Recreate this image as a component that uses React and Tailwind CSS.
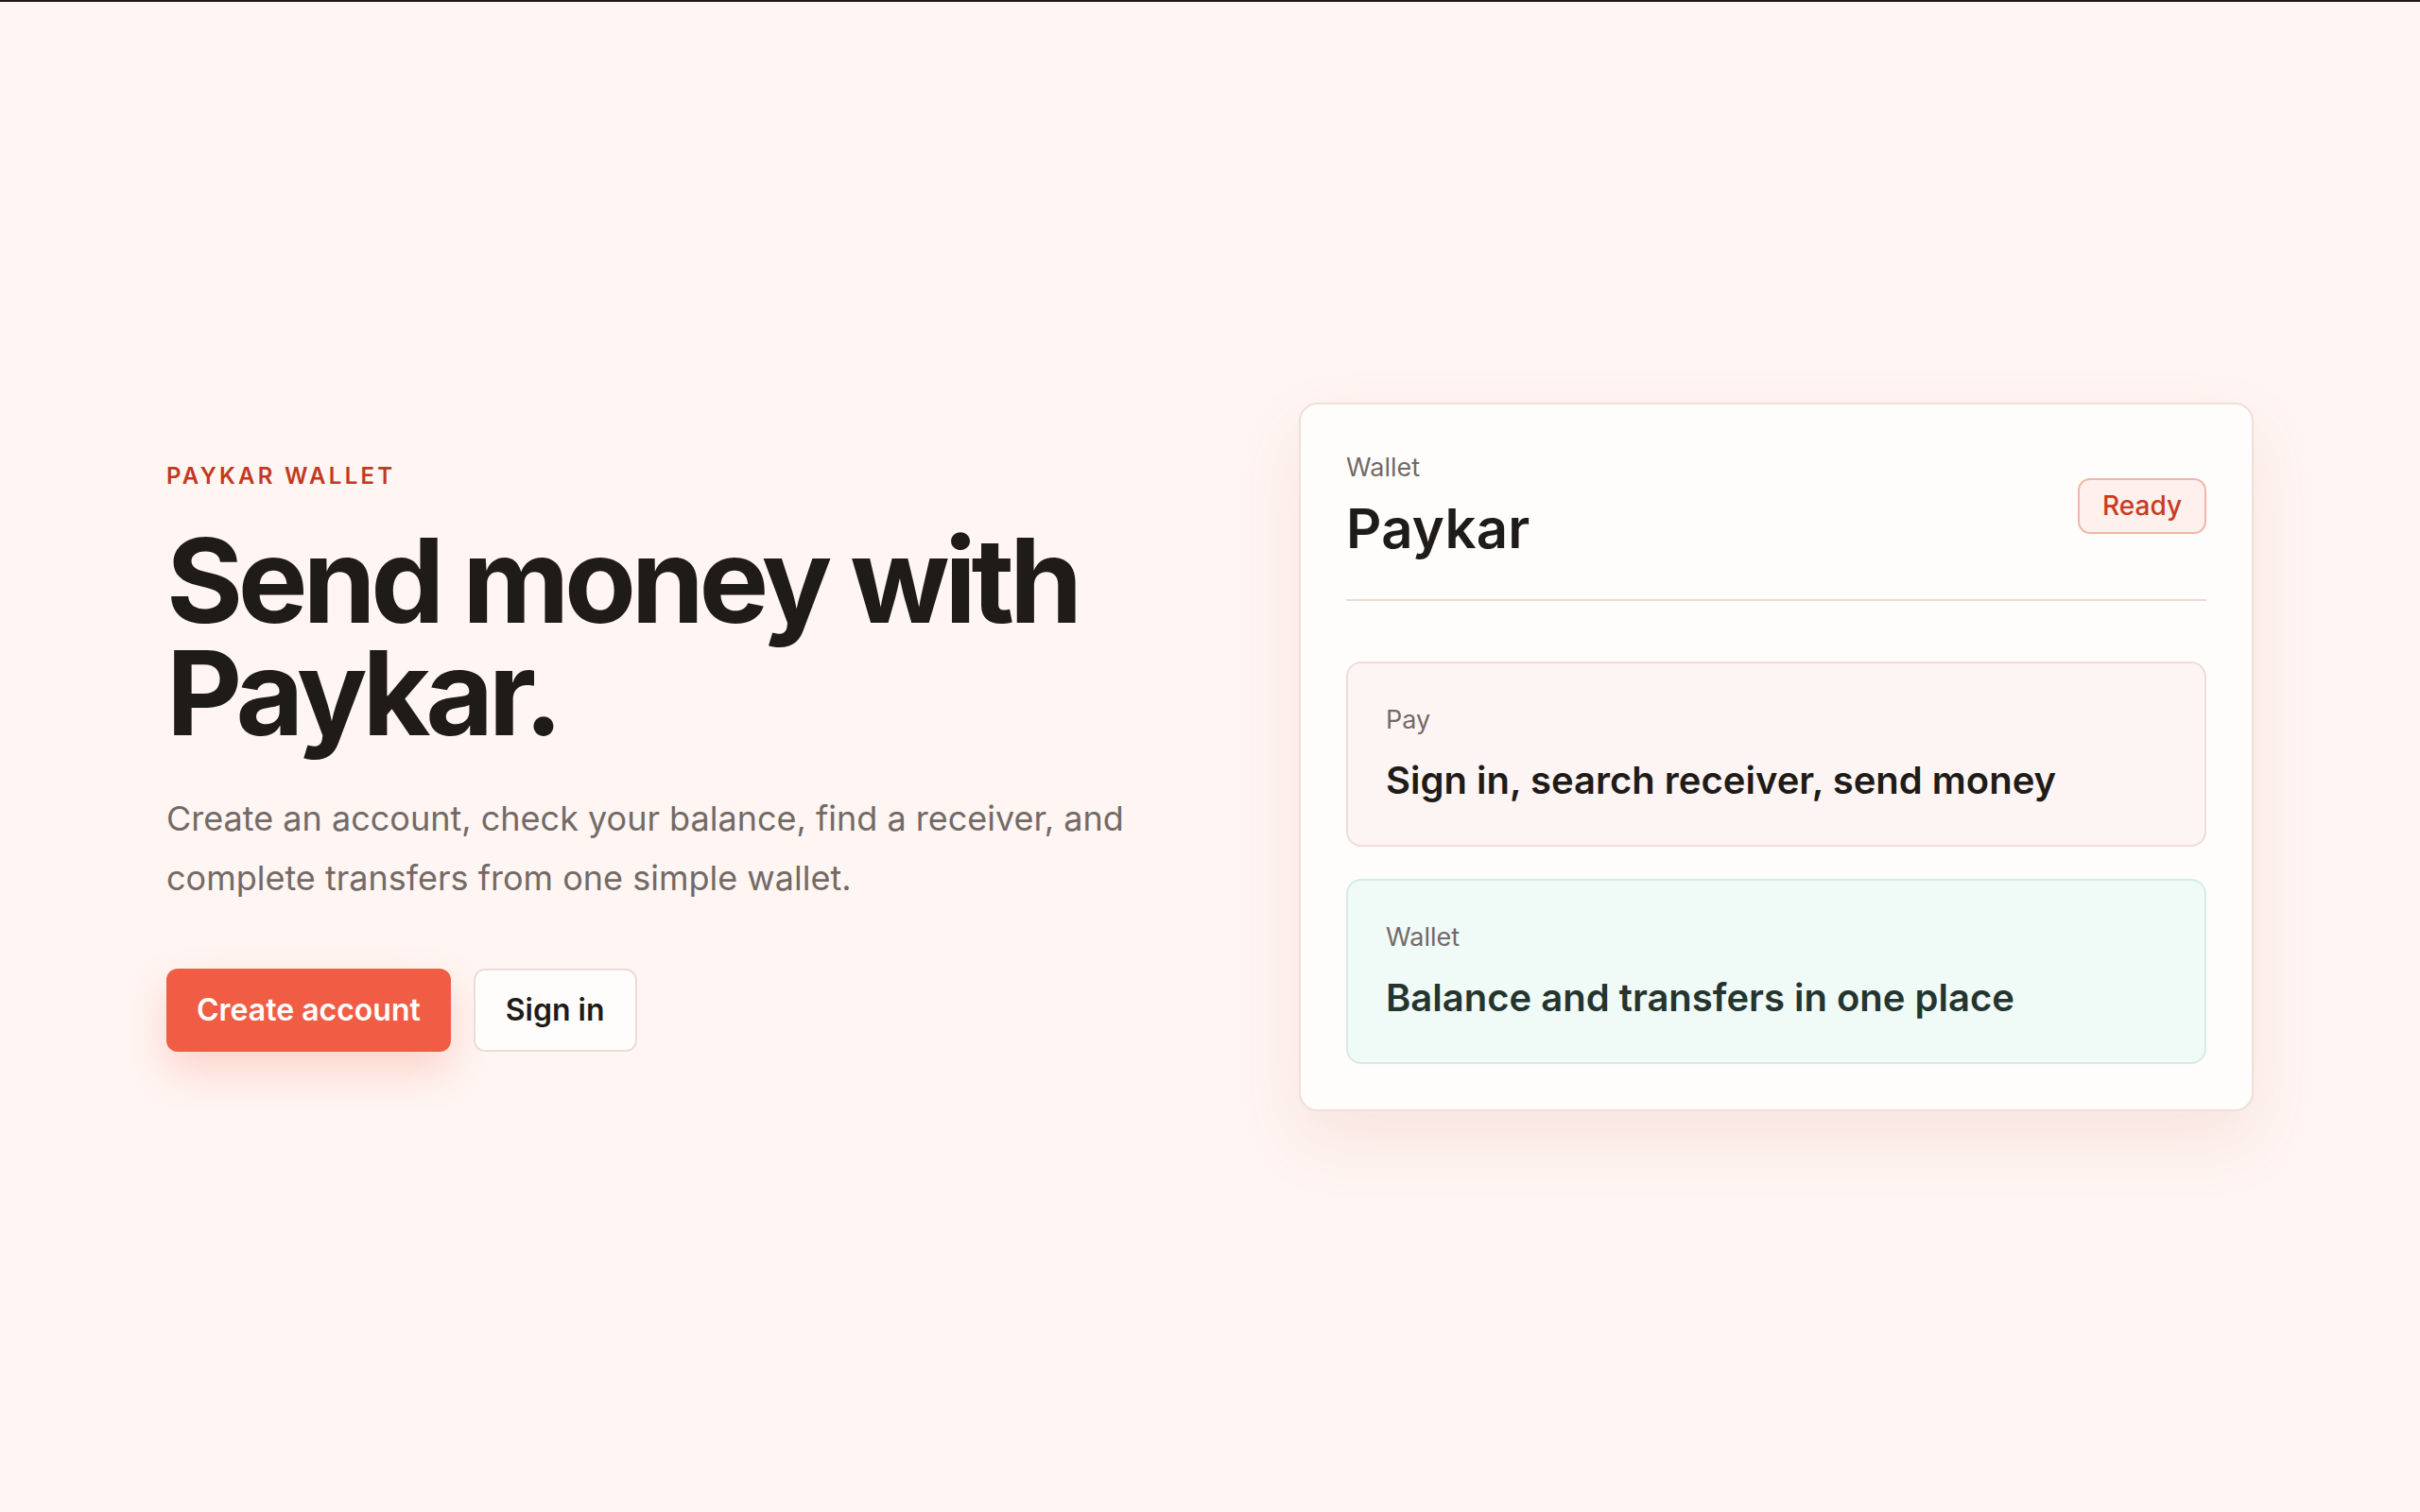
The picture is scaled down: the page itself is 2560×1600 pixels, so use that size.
export default function App() {
  return (
    <div className="min-h-screen bg-[#fff5f2] border-t-2 border-[#1f1a17] font-[family-name:Inter,sans-serif] flex items-center justify-between px-[176px]">
      <div className="flex-1 pt-[3px]">
        <p className="text-[24px] leading-none font-semibold tracking-[0.135em] text-[#c2391f] uppercase">Paykar wallet</p>
        <h1 className="mt-[39px] text-[124px] leading-[119px] font-bold tracking-[-0.043em] text-[#1f1b18]">
          Send money with
          <br />
          Paykar.
        </h1>
        <p className="mt-[42px] max-w-[1060px] text-[36px] leading-[63px] text-[#736a66]">
          Create an account, check your balance, find a receiver, and complete transfers from one simple wallet.
        </p>
        <div className="mt-[64px] flex gap-6">
          <button className="h-[88px] px-8 rounded-[12px] bg-[#f05d44] text-white text-[32px] font-semibold shadow-[0_20px_44px_rgba(240,93,68,0.22)]">
            Create account
          </button>
          <button className="h-[88px] px-8 rounded-[12px] bg-[#fffdfc] border-2 border-[#ebdcd7] text-[#1f1b18] text-[32px] font-semibold">
            Sign in
          </button>
        </div>
      </div>
      <div className="w-[1010px] rounded-[20px] border-2 border-[#efdfdb] bg-[#fffdfc] p-12 shadow-[0_30px_70px_rgba(190,110,90,0.12)]">
        <div className="flex items-center justify-between pb-10 border-b-2 border-[#eadbd6]">
          <div>
            <p className="text-[27px] leading-[37px] text-[#736a66]">Wallet</p>
            <p className="mt-3 text-[58px] leading-[1.2] font-semibold tracking-[0.005em] text-[#1f1b18]">Paykar</p>
          </div>
          <span className="rounded-[13px] border-2 border-[#f1b6a9] bg-[#fdf0ed] px-6 py-2 text-[28px] leading-[39px] font-medium text-[#c93b22]">
            Ready
          </span>
        </div>
        <div className="mt-16 rounded-[16px] border-2 border-[#efdcd7] bg-[#fdf5f3] p-10">
          <p className="text-[27px] leading-[40px] text-[#736a66]">Pay</p>
          <p className="mt-4 text-[40px] leading-[1.4] font-semibold text-[#1f1b18]">Sign in, search receiver, send money</p>
        </div>
        <div className="mt-[34px] rounded-[16px] border-2 border-[#d5ebe3] bg-[#f0faf6] p-10">
          <p className="text-[27px] leading-[40px] text-[#736a66]">Wallet</p>
          <p className="mt-4 text-[40px] leading-[1.4] font-semibold text-[#23352e]">Balance and transfers in one place</p>
        </div>
      </div>
    </div>
  );
}
